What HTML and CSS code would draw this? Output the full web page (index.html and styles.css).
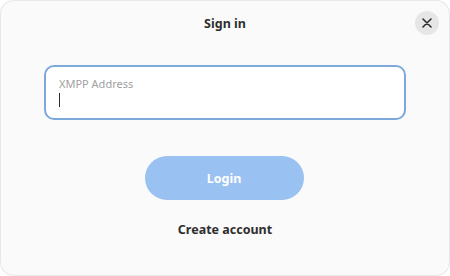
FILE: index.html
```html
<!DOCTYPE html>
<html>
<head>
<meta charset="utf-8">
<link rel="stylesheet" href="styles.css">
</head>
<body>
<div class="dialog">
  <header class="header">
    <h1 class="title">Sign in</h1>
    <button class="close" aria-label="Close">
      <svg width="10" height="10" viewBox="0 0 10 10"><path d="M1 1L9 9M9 1L1 9" stroke="#2e2e2e" stroke-width="1.6" stroke-linecap="round"/></svg>
    </button>
  </header>
  <div class="content">
    <div class="entry">
      <span class="entry-label">XMPP Address</span>
      <span class="caret"></span>
    </div>
    <button class="login">Login</button>
    <button class="link">Create account</button>
  </div>
</div>
</body>
</html>
```
FILE: styles.css
```css
* { box-sizing: border-box; }
html, body { margin: 0; padding: 0; }
body {
  width: 450px;
  height: 276px;
  background: #ffffff;
  font-family: "Noto Sans", "Open Sans", sans-serif;
}
.dialog {
  width: 450px;
  height: 276px;
  background: #fafafa;
  border-radius: 14px;
  box-shadow: inset 0 0 0 1px #e8e8e8;
  display: flex;
  flex-direction: column;
}
.header {
  height: 46px;
  display: flex;
  align-items: center;
  justify-content: center;
  position: relative;
}
.title {
  margin: 0;
  font-size: 12.5px;
  font-weight: 700;
  color: #2e2e2e;
}
.close {
  position: absolute;
  right: 11px;
  top: 11px;
  width: 24px;
  height: 24px;
  border-radius: 50%;
  border: none;
  background: #e6e6e6;
  padding: 0;
  display: flex;
  align-items: center;
  justify-content: center;
}
.content {
  display: flex;
  flex-direction: column;
  align-items: center;
  padding: 19px 44px 0 44px;
}
.entry {
  width: 362px;
  height: 55px;
  background: #ffffff;
  border: 2px solid #7ca8db;
  border-radius: 10px;
  padding: 9px 13px 0 13px;
  display: flex;
  flex-direction: column;
  align-items: flex-start;
}
.entry-label {
  font-size: 11px;
  color: #a0a0a0;
  line-height: 15px;
}
.caret {
  width: 1px;
  height: 14px;
  background: #2e2e2e;
  margin-top: 2px;
}
.login {
  margin-top: 36px;
  margin-right: 2px;
  width: 159px;
  height: 44px;
  border-radius: 22px;
  border: none;
  background: #99c1f1;
  color: #ffffff;
  font-family: inherit;
  font-size: 12.5px;
  font-weight: 700;
  padding: 0;
}
.link {
  margin-top: 16px;
  border: none;
  background: none;
  font-family: inherit;
  font-size: 12.5px;
  font-weight: 700;
  color: #2e2e2e;
  padding: 0;
  height: 26px;
}
```
